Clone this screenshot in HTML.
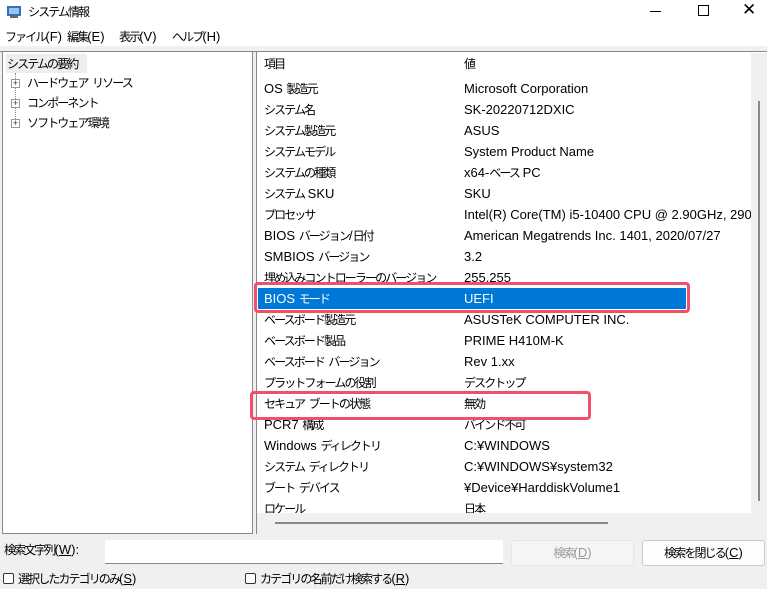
<!DOCTYPE html>
<html><head><meta charset="utf-8"><style>
*{margin:0;padding:0;box-sizing:border-box}
body{width:767px;height:589px;overflow:hidden;background:#f0f0f0;font-family:"Liberation Sans","Noto Sans CJK JP",sans-serif;font-size:13px;color:#000;position:relative}
.a{position:absolute;white-space:nowrap}
.j{font-style:normal;font-size:12px;letter-spacing:-1.9px;word-spacing:3px}
.row{position:absolute;left:258px;width:493px;height:21px;line-height:21px;white-space:nowrap;overflow:hidden}
.row span{position:absolute;white-space:nowrap;overflow:hidden}
.n{left:6px;width:198px}.v{left:206px;width:287px}
</style></head><body>
<div class="a" style="left:0;top:0;width:767px;height:46px;background:#fff"></div>
<svg class="a" style="left:6px;top:4px" width="16" height="16"><rect x="1" y="2" width="14" height="10" fill="#3a6fb8"/><rect x="3" y="4" width="10" height="6" fill="#9cc3ee"/><rect x="4" y="12" width="8" height="2" fill="#666"/></svg>
<div class="a" style="left:28px;top:3px"><i class="j">システム情報</i></div>
<div class="a" style="left:650px;top:11px;width:11px;border-top:1px solid #000"></div>
<div class="a" style="left:698px;top:5px;width:11px;height:11px;border:1px solid #000"></div>
<div class="a" style="left:742px;top:0px;font-size:17px">✕</div>
<div class="a" style="left:5px;top:28px"><i class="j">ファイル</i>(F)</div>
<div class="a" style="left:67px;top:28px"><i class="j">編集</i>(E)</div>
<div class="a" style="left:119px;top:28px"><i class="j">表示</i>(V)</div>
<div class="a" style="left:172px;top:28px"><i class="j">ヘルプ</i>(H)</div>
<div class="a" style="left:0;top:51px;width:767px;border-top:1px solid #888"></div>
<div class="a" style="left:2px;top:51px;width:251px;height:483px;background:#fff;border:1px solid #888"></div>
<div class="a" style="left:6px;top:54px;width:81px;height:19px;background:#eee;line-height:19px;padding-left:1px"><i class="j">システムの要約</i></div>
<div class="a" style="left:15px;top:73px;height:52px;border-left:1px dotted #888"></div>
<div class="a" style="left:11px;top:79px;width:9px;height:9px;border:1px solid #999;background:#fff;font-size:9px;line-height:7px;text-align:center;color:#333">+</div>
<div class="a" style="left:11px;top:99px;width:9px;height:9px;border:1px solid #999;background:#fff;font-size:9px;line-height:7px;text-align:center;color:#333">+</div>
<div class="a" style="left:11px;top:119px;width:9px;height:9px;border:1px solid #999;background:#fff;font-size:9px;line-height:7px;text-align:center;color:#333">+</div>
<div class="a" style="left:27px;top:74px"><i class="j">ハードウェア リソース</i></div>
<div class="a" style="left:27px;top:94px"><i class="j">コンポーネント</i></div>
<div class="a" style="left:27px;top:114px"><i class="j">ソフトウェア環境</i></div>
<div class="a" style="left:256px;top:51px;width:511px;height:483px;background:#fff;border-left:1px solid #888;border-top:1px solid #888"></div>
<div class="a" style="left:751px;top:53px;width:16px;height:481px;background:#f0f0f0"></div>
<div class="a" style="left:758px;top:101px;width:2px;height:400px;background:#888"></div>
<div class="row" style="top:53px"><span class="n"><i class="j">項目</i></span><span class="v"><i class="j">値</i></span></div>
<div class="row" style="top:78px"><span class="n">OS <i class="j">製造元</i></span><span class="v">Microsoft Corporation</span></div>
<div class="row" style="top:99px"><span class="n"><i class="j">システム名</i></span><span class="v">SK-20220712DXIC</span></div>
<div class="row" style="top:120px"><span class="n"><i class="j">システム製造元</i></span><span class="v">ASUS</span></div>
<div class="row" style="top:141px"><span class="n"><i class="j">システムモデル</i></span><span class="v">System Product Name</span></div>
<div class="row" style="top:162px"><span class="n"><i class="j">システムの種類</i></span><span class="v">x64-<i class="j">ベース</i> PC</span></div>
<div class="row" style="top:183px"><span class="n"><i class="j">システム</i> SKU</span><span class="v">SKU</span></div>
<div class="row" style="top:204px"><span class="n"><i class="j">プロセッサ</i></span><span class="v">Intel(R) Core(TM) i5-10400 CPU @ 2.90GHz, 2904</span></div>
<div class="row" style="top:225px"><span class="n">BIOS <i class="j">バージョン</i>/<i class="j">日付</i></span><span class="v">American Megatrends Inc. 1401, 2020/07/27</span></div>
<div class="row" style="top:246px"><span class="n">SMBIOS <i class="j">バージョン</i></span><span class="v">3.2</span></div>
<div class="row" style="top:267px"><span class="n"><i class="j">埋め込みコントローラーのバージョン</i></span><span class="v">255.255</span></div>
<div class="row" style="top:288px;width:428px;background:#0078d7;color:#fff"><span class="n">BIOS <i class="j">モード</i></span><span class="v">UEFI</span></div>
<div class="row" style="top:309px"><span class="n"><i class="j">ベースボード製造元</i></span><span class="v">ASUSTeK COMPUTER INC.</span></div>
<div class="row" style="top:330px"><span class="n"><i class="j">ベースボード製品</i></span><span class="v">PRIME H410M-K</span></div>
<div class="row" style="top:351px"><span class="n"><i class="j">ベースボード バージョン</i></span><span class="v">Rev 1.xx</span></div>
<div class="row" style="top:372px"><span class="n"><i class="j">プラットフォームの役割</i></span><span class="v"><i class="j">デスクトップ</i></span></div>
<div class="row" style="top:393px"><span class="n"><i class="j">セキュア ブートの状態</i></span><span class="v"><i class="j">無効</i></span></div>
<div class="row" style="top:414px"><span class="n">PCR7 <i class="j">構成</i></span><span class="v"><i class="j">バインド不可</i></span></div>
<div class="row" style="top:435px"><span class="n">Windows <i class="j">ディレクトリ</i></span><span class="v">C:¥WINDOWS</span></div>
<div class="row" style="top:456px"><span class="n"><i class="j">システム ディレクトリ</i></span><span class="v">C:¥WINDOWS¥system32</span></div>
<div class="row" style="top:477px"><span class="n"><i class="j">ブート デバイス</i></span><span class="v">¥Device¥HarddiskVolume1</span></div>
<div class="row" style="top:498px"><span class="n"><i class="j">ロケール</i></span><span class="v"><i class="j">日本</i></span></div>
<div class="a" style="left:257px;top:513px;width:494px;height:21px;background:#f0f0f0"></div>
<div class="a" style="left:275px;top:522px;width:333px;height:2px;background:#888"></div>
<div class="a" style="left:254px;top:282px;width:436px;height:31px;border:3px solid #f0506a;border-radius:4px"></div>
<div class="a" style="left:250px;top:391px;width:341px;height:29px;border:3px solid #f0506a;border-radius:4px"></div>
<div class="a" style="left:4px;top:541px"><i class="j">検索文字列</i>(<u>W</u>):</div>
<div class="a" style="left:105px;top:540px;width:398px;height:24px;background:#fff;border-bottom:1px solid #888"></div>
<div class="a" style="left:511px;top:540px;width:123px;height:26px;background:#f5f5f5;border:1px solid #e5e5e5;border-radius:3px;text-align:center;line-height:24px;color:#9a9a9a"><i class="j">検索</i>(<u>D</u>)</div>
<div class="a" style="left:642px;top:540px;width:123px;height:26px;background:#fdfdfd;border:1px solid #ccc;border-radius:3px;text-align:center;line-height:24px"><i class="j">検索を閉じる</i>(<u>C</u>)</div>
<div class="a" style="left:3px;top:573px;width:11px;height:11px;border:1px solid #333;border-radius:2px;background:#fff"></div>
<div class="a" style="left:18px;top:570px"><i class="j">選択したカテゴリのみ</i>(<u>S</u>)</div>
<div class="a" style="left:245px;top:573px;width:11px;height:11px;border:1px solid #333;border-radius:2px;background:#fff"></div>
<div class="a" style="left:260px;top:570px"><i class="j">カテゴリの名前だけ検索する</i>(<u>R</u>)</div>
</body></html>
